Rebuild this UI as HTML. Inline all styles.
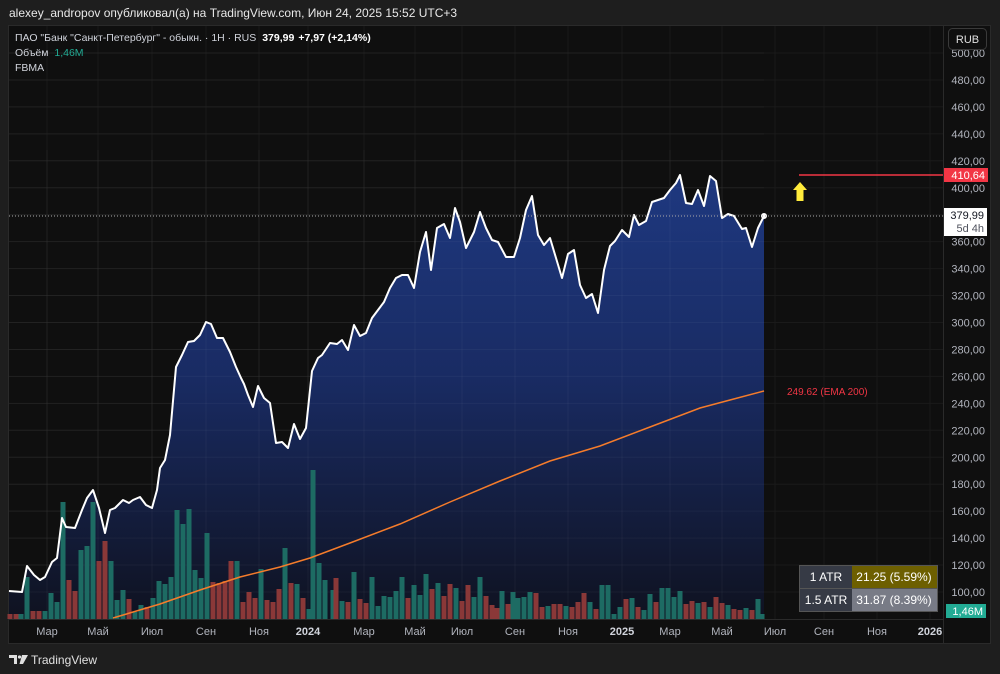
<!DOCTYPE html>
<html><head><meta charset="utf-8"><style>
html,body{margin:0;padding:0;background:#1e1e1e;width:1000px;height:674px;overflow:hidden;font-family:"Liberation Sans","DejaVu Sans",sans-serif;}
</style></head><body>
<svg id="s" width="1000" height="674" xmlns="http://www.w3.org/2000/svg" style="position:absolute;left:0;top:0;font-family:'Liberation Sans','DejaVu Sans',sans-serif">
<defs>
<linearGradient id="g" gradientUnits="userSpaceOnUse" x1="0" y1="180" x2="0" y2="619">
<stop offset="0" stop-color="#1e387f"/><stop offset="0.45" stop-color="#192b63"/><stop offset="1" stop-color="#0f1220"/>
</linearGradient>
</defs>
<rect x="0" y="0" width="1000" height="674" fill="#1e1e1e"/>
<text x="9" y="17" fill="#e8e8e8" font-size="12">alexey_andropov опубликовал(а) на TradingView.com, Июн 24, 2025 15:52 UTC+3</text>
<rect x="8.5" y="25.5" width="982" height="618" fill="#0f0f0f" stroke="#2a2a2a"/>
<g id="grid" stroke="#1a1a1a" stroke-width="1"></g>
<path id="area" fill="url(#g)"/>
<g id="grid2" stroke="#ffffff" stroke-opacity="0.04" stroke-width="1"></g>
<g id="vol"></g>
<polyline points="113,618 160,604 200,590 240,577 280,567 310,558 350,543 400,524 450,502 500,481 550,461 600,446 650,427 700,408 730,400 764,391" fill="none" stroke="#f57c2b" stroke-width="1.5"/>
<path id="line" fill="none" stroke="#fff" stroke-width="2" stroke-linejoin="round"/>
<circle cx="764" cy="216" r="3" fill="#fff"/>
<line x1="9" y1="216" x2="944" y2="216" stroke="#aaa" stroke-dasharray="1,2"/>
<line x1="799" y1="175" x2="944" y2="175" stroke="#f23645" stroke-width="1.5"/>
<path d="M800,182 L807,190 L803.5,190 L803.5,201 L796.5,201 L796.5,190 L793,190 Z" fill="#ffeb3b"/>
<text x="787" y="395" fill="#f23645" font-size="10">249.62 (EMA 200)</text>
<line x1="943.5" y1="26" x2="943.5" y2="643" stroke="#2a2a2a"/>
<line x1="9" y1="619.5" x2="943" y2="619.5" stroke="#2a2a2a"/>
<g id="axis" fill="#b2b5be" font-size="11"></g>
<g id="taxis" fill="#b2b5be" font-size="11" text-anchor="middle"></g>
<rect x="948.5" y="28.5" width="38" height="21" rx="4" fill="#0f0f0f" stroke="#3a3a3a"/>
<text x="967.5" y="43" fill="#e0e0e0" font-size="11" text-anchor="middle">RUB</text>
<rect x="944" y="168" width="44" height="14" fill="#f23645"/>
<text x="985" y="179" fill="#fff" font-size="11" text-anchor="end">410,64</text>
<rect x="944" y="208" width="43" height="28" fill="#fff"/>
<text x="984" y="219" fill="#131722" font-size="11" text-anchor="end">379,99</text>
<text x="984" y="232" fill="#50535e" font-size="11" text-anchor="end">5d 4h</text>
<rect x="946" y="604" width="40" height="14" fill="#22ab94"/>
<text x="983" y="615" fill="#fff" font-size="11" text-anchor="end">1,46M</text>
<rect x="799.5" y="565.5" width="138" height="46" fill="#363a45" stroke="#555"/>
<rect x="852" y="566" width="85" height="22" fill="#6d5f00"/>
<rect x="852" y="589" width="85" height="22" fill="#787b86"/>
<line x1="800" y1="588.5" x2="937" y2="588.5" stroke="#555"/>
<g font-size="12" fill="#fff"><text x="826" y="581" text-anchor="middle">1 ATR</text><text x="826" y="604" text-anchor="middle">1.5 ATR</text>
<text x="894" y="581" text-anchor="middle">21.25 (5.59%)</text><text x="894" y="604" text-anchor="middle">31.87 (8.39%)</text></g>
<text x="15" y="41" fill="#d1d4dc" font-size="10.5">ПАО "Банк "Санкт-Петербург" - обыкн. · 1Н · RUS <tspan fill="#fff" font-weight="bold" dx="3">379,99</tspan><tspan fill="#fff" font-weight="bold" dx="4">+7,97 (+2,14%)</tspan></text>
<text x="15" y="56" fill="#d1d4dc" font-size="10.5">Объём <tspan fill="#22ab94" dx="3">1,46M</tspan></text>
<text x="15" y="71" fill="#d1d4dc" font-size="10.5">FBMA</text>
<g fill="#e0e0e0"><path d="M9,655 h8 v9 h-3 v-6 h-5 z"/><circle cx="19.5" cy="657" r="1.6"/><path d="M22,655 h6 l-5,9 h-3.5 z"/></g>
<text x="31" y="664" fill="#e0e0e0" font-size="12">TradingView</text>
</svg>
<script>
var NS="http://www.w3.org/2000/svg";
function el(p,t,a,txt){var e=document.createElementNS(NS,t);for(var k in a)e.setAttribute(k,a[k]);if(txt)e.textContent=txt;document.getElementById(p).appendChild(e);return e;}
var pts=[[9,591],[22,592],[27,566],[34,575],[40,580],[45,577],[52,562],[57,558],[62,518],[66,527],[75,528],[82,510],[87,498],[93,490],[99,508],[105,533],[110,510],[115,508],[123,500],[129,503],[133,500],[140,497],[146,505],[152,508],[157,490],[160,468],[165,460],[170,435],[176,367],[182,355],[188,342],[194,341],[200,335],[206,322],[211,324],[217,338],[223,338],[230,352],[236,367],[241,378],[244,384],[248,395],[253,407],[258,386],[264,398],[270,403],[276,443],[282,442],[288,448],[294,424],[300,439],[306,428],[312,371],[318,358],[322,355],[330,343],[337,344],[342,340],[348,350],[354,325],[360,336],[366,333],[372,318],[378,310],[384,302],[390,288],[396,278],[402,275],[408,275],[414,288],[420,252],[426,232],[431,270],[437,228],[444,224],[450,238],[455,208],[460,222],[466,248],[474,232],[480,212],[486,228],[492,240],[498,242],[506,257],[514,257],[520,238],[526,210],[532,196],[538,235],[544,245],[550,238],[556,258],[562,278],[568,254],[574,250],[580,285],[586,298],[592,294],[598,313],[604,270],[610,246],[615,241],[622,230],[629,237],[634,215],[639,225],[646,221],[652,202],[658,200],[664,198],[670,190],[676,183],[680,175],[686,203],[692,204],[698,190],[704,206],[710,176],[716,181],[722,218],[728,214],[734,216],[742,229],[746,228],[752,247],[758,228],[764,216]];
var d="M"+pts.map(function(p){return p[0]+","+p[1]}).join(" L");
document.getElementById("line").setAttribute("d",d);
document.getElementById("area").setAttribute("d",d+" L764,619 L9,619 Z");
for(var p=100;p<=500;p+=20){var y=592-(p-100)*1.3475;
 if(y>30){el("grid","line",{x1:9,x2:943,y1:y,y2:y});el("grid2","line",{x1:9,x2:764,y1:y,y2:y});}
 el("axis","text",{x:985,y:y+4,"text-anchor":"end"},(p+",00"));}
var months=[["Мар",47],["Май",98],["Июл",152],["Сен",206],["Ноя",259],["2024",308],["Мар",364],["Май",415],["Июл",462],["Сен",515],["Ноя",568],["2025",622],["Мар",670],["Май",722],["Июл",775],["Сен",824],["Ноя",877],["2026",930]];
months.forEach(function(m){el("grid","line",{x1:m[1],x2:m[1],y1:26,y2:619});if(m[1]<764)el("grid2","line",{x1:m[1],x2:m[1],y1:150,y2:619});
 var t=el("taxis","text",{x:m[1],y:635},m[0]);if(/^\d/.test(m[0])){t.setAttribute("font-weight","bold");t.setAttribute("fill","#d1d4dc");}});
var T="#1d6b63",R="#8a3838";
var v=[[10,614,R],[16,614,R],[21,614,T],[27,577,T],[33,611,R],[39,611,R],[45,611,T],[51,593,T],[57,602,T],[63,502,T],[69,580,R],[75,591,R],[81,550,T],[87,546,T],[93,502,T],[99,561,R],[105,541,R],[111,561,T],[117,600,T],[123,590,T],[129,599,R],[135,612,T],[141,605,T],[147,607,R],[153,598,T],[159,581,T],[165,584,T],[171,577,T],[177,510,T],[183,524,T],[189,509,T],[195,570,T],[201,578,T],[207,533,T],[213,582,R],[219,583,R],[225,581,R],[231,561,R],[237,561,T],[243,602,R],[249,592,R],[255,598,R],[261,569,T],[267,600,R],[273,602,R],[279,589,R],[285,548,T],[291,583,R],[297,584,T],[303,598,R],[309,609,T],[313,470,T],[319,563,T],[325,580,T],[333,590,T],[336,578,R],[342,601,T],[348,602,R],[354,572,T],[360,599,R],[366,603,R],[372,577,T],[378,606,T],[384,596,T],[390,597,T],[396,591,T],[402,577,T],[408,598,R],[414,585,T],[420,595,T],[426,574,T],[432,589,R],[438,583,T],[444,596,R],[450,584,R],[456,588,T],[462,601,R],[468,585,R],[474,597,T],[480,577,T],[486,596,R],[492,605,R],[497,608,R],[502,591,T],[508,604,R],[513,592,T],[518,598,T],[524,597,T],[530,592,T],[536,593,R],[542,607,R],[548,606,T],[554,604,R],[560,604,R],[566,606,T],[572,607,R],[578,602,R],[584,593,R],[590,602,T],[596,609,R],[602,585,T],[608,585,T],[614,614,T],[620,607,T],[626,599,R],[632,598,T],[638,607,R],[644,610,T],[650,594,T],[656,602,R],[662,588,T],[668,588,T],[674,597,T],[680,591,T],[686,604,R],[692,601,R],[698,603,T],[704,602,R],[710,607,T],[716,597,R],[722,603,R],[728,605,T],[734,609,R],[740,610,R],[746,608,T],[752,610,R],[758,599,T],[762,614,T]];
v.forEach(function(b){el("vol","rect",{x:b[0]-2.5,y:b[1],width:5,height:619-b[1],fill:b[2]});});
</script>
</body></html>
